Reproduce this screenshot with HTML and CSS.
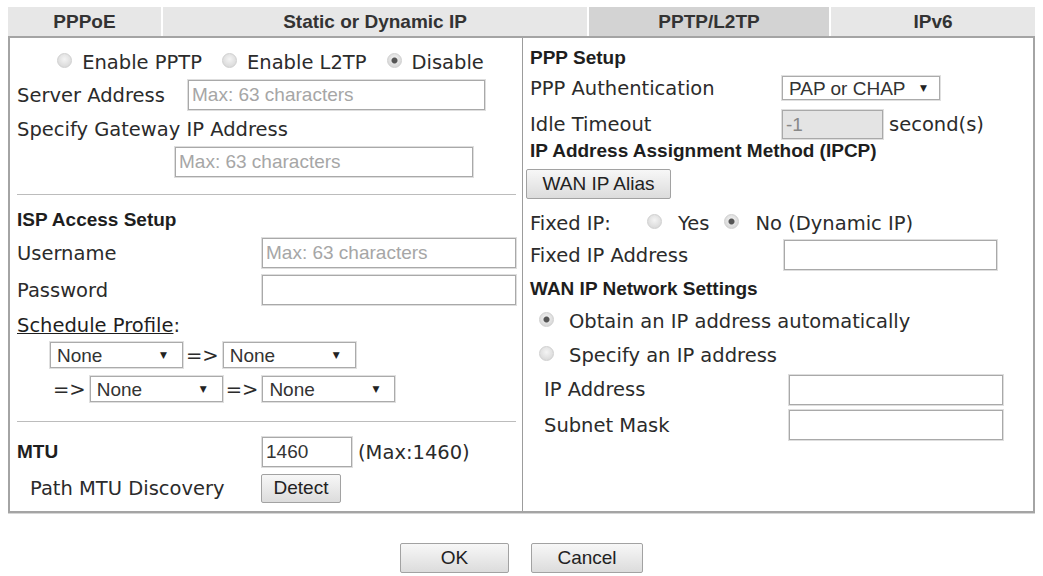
FILE: index.html
```html
<!DOCTYPE html>
<html>
  <head>
    <meta charset="utf-8" />

    <title>WAN &gt;&gt; General Setup</title>

    <link rel="stylesheet" href="styles.css">
  </head>

  <body>
    <div class="crumb"></div>

    <ul class="tabs">
      <li>PPPoE</li>
      <li>Static or Dynamic IP</li>
      <li class="active">PPTP/L2TP</li>
      <li>IPv6</li>
    </ul>

    <form class="panel">
      <div class="col left">
        <div class="row radios">
          <label class="opt"><input type="radio" name="mode" /> Enable PPTP</label>
          <label class="opt"><input type="radio" name="mode" /> Enable L2TP</label>
          <label class="opt"><input type="radio" name="mode" checked /> Disable</label>
        </div>
        <div class="row">
          <span class="key key-server">Server Address</span>
          <input type="text" class="text in-server" placeholder="Max: 63 characters" />
        </div>
        <div class="row">Specify Gateway IP Address</div>
        <div class="row">
          <input type="text" class="text in-gw" placeholder="Max: 63 characters" />
        </div>
        <hr class="rule" />
        <div class="head">ISP Access Setup</div>
        <div class="row">
          <span class="key">Username</span>
          <input type="text" class="text in-user" placeholder="Max: 63 characters" />
        </div>
        <div class="row">
          <span class="key">Password</span>
          <input type="password" class="text in-user" />
        </div>
        <div class="row"><a class="link">Schedule Profile</a>:</div>
        <div class="row sched">
          <span class="select"><select><option>None</option></select></span>
          <span class="arrow">=&gt;</span>
          <span class="select"><select><option>None</option></select></span>
        </div>
        <div class="row sched">
          <span class="arrow">=&gt;</span>
          <span class="select"><select><option>None</option></select></span>
          <span class="arrow">=&gt;</span>
          <span class="select"><select><option>None</option></select></span>
        </div>
        <hr class="rule" />
        <div class="row">
          <span class="key head">MTU</span>
          <input type="text" class="text in-mtu" value="1460" />
          <span class="hint">(Max:1460)</span>
        </div>
        <div class="row indent">
          <span class="key key-path">Path MTU Discovery</span>
          <button type="button" class="btn btn-detect">Detect</button>
        </div>
      </div>

      <div class="col right">
        <div class="head">PPP Setup</div>
        <div class="row">
          <span class="key-r">PPP Authentication</span>
          <span class="select select-auth"><select><option>PAP or CHAP</option></select></span>
        </div>
        <div class="row">
          <span class="key-r">Idle Timeout</span>
          <input type="text" class="text in-idle" value="-1" disabled />
          <span class="hint">second(s)</span>
        </div>
        <div class="head">IP Address Assignment Method (IPCP)</div>
        <div class="row">
          <button type="button" class="btn btn-alias">WAN IP Alias</button>
        </div>
        <div class="row">
          <span class="key-fixed">Fixed IP:</span>
          <label class="opt"><input type="radio" name="fixed" /> Yes</label>
          <label class="opt opt-no"><input type="radio" name="fixed" checked /> No (Dynamic IP)</label>
        </div>
        <div class="row">
          <span class="key-r key-wide">Fixed IP Address</span>
          <input type="text" class="text in-fixed" />
        </div>
        <div class="head">WAN IP Network Settings</div>
        <div class="row choice">
          <label class="opt"><input type="radio" name="wanip" checked /> Obtain an IP address automatically</label>
        </div>
        <div class="row choice">
          <label class="opt"><input type="radio" name="wanip" /> Specify an IP address</label>
        </div>
        <div class="row indent">
          <span class="key-ip">IP Address</span>
          <input type="text" class="text in-ip" />
        </div>
        <div class="row indent">
          <span class="key-ip">Subnet Mask</span>
          <input type="text" class="text in-ip" />
        </div>
      </div>
    </form>

    <div class="actions">
      <button type="button" class="btn btn-ok">OK</button>
      <button type="button" class="btn btn-cancel">Cancel</button>
    </div>
  </body>
</html>
```

FILE: styles.css
```css
html {
  font-family: "DejaVu Sans", Verdana, sans-serif;
  font-size: 19.5px;
  color: #2b2b2b;
}

body {
  margin: 0 8px;
  background: #fff;
}

.crumb {
  height: 7px;
}

/* tabs */
.tabs {
  display: grid;
  grid-template-columns: 153px 424px 240px 1fr;
  column-gap: 2px;
  height: 29px;
  margin: 0;
  padding: 0;
  list-style: none;
}
.tabs li {
  display: flex;
  align-items: center;
  justify-content: center;
  background: #e7e7e7;
  font: bold 19px "Liberation Sans", Arial, sans-serif;
  color: #333;
}
.tabs .active {
  background: #d3d3d3;
}

/* panel */
.panel {
  display: grid;
  grid-template-columns: 513px 1fr;
  margin: 0;
  border: 2px solid #a4a4a4;
  box-shadow: 0 1px 0 #d6d6d6;
}

.col {
  display: grid;
  align-items: center;
  align-content: start;
  box-sizing: border-box;
}

.left {
  border-right: 1px solid #9c9c9c;
  padding: 12px 7px 7px;
  grid-template-rows: 24px 42px 26px 40px 24px 28px 38px 36px 34px 26px 42px 22px 40px 32px;
}

.right {
  padding: 8px 7px 0;
  grid-template-rows: 23px 38px 35px 17px 49px 30px 34px 33px 33px 35px 33px 38px;
}

.row {
  display: flex;
  align-items: center;
  white-space: nowrap;
}

.head {
  font: bold 19px "Liberation Sans", Arial, sans-serif;
  color: #1e1e1e;
  white-space: nowrap;
}

.rule {
  margin: 0;
  border: 0;
  border-top: 1px solid #bcbcbc;
}

.key {
  width: 245px;
  flex: none;
}
.key-server {
  width: 171px;
}
.key-path {
  width: 231px;
}
.key-r {
  width: 252px;
  flex: none;
}
.key-wide {
  width: 254px;
}
.key-fixed {
  width: 117px;
  flex: none;
}
.key-ip {
  width: 245px;
  flex: none;
}

.indent {
  padding-left: 13px;
}
.right .indent {
  padding-left: 14px;
}

.hint {
  margin-left: 6px;
}

.link {
  color: #1e1e1e;
  text-decoration: underline;
}

/* radios */
.radios {
  justify-content: center;
  gap: 20px;
  padding-left: 8px;
}
.opt {
  display: flex;
  align-items: center;
}
input[type="radio"] {
  appearance: none;
  width: 15px;
  height: 15px;
  margin: 0 10px 4px 0;
  border: 1px solid #d0d0d0;
  border-radius: 50%;
  background: radial-gradient(circle at 50% 40%, #f4f4f4, #d2d2d2);
  flex: none;
}
input[type="radio"]:checked {
  background: radial-gradient(circle, #555 0 2.5px, transparent 3.5px),
    radial-gradient(circle at 50% 40%, #f4f4f4, #cecece);
}
.right .row > .opt input {
  margin-right: 16px;
}
.opt-no {
  margin-left: 15px;
}
.choice {
  padding-left: 9px;
}
.right .choice .opt input {
  margin-right: 15px;
}

/* text fields */
.text {
  box-sizing: border-box;
  height: 30px;
  padding: 0 3px;
  border: 1px solid #a9a9a9;
  box-shadow: 0 0 0 1px #dedede;
  font: 19px "Liberation Sans", Arial, sans-serif;
  color: #333;
  background: #fff;
}
.text::placeholder {
  color: #a6a6a6;
}
.in-server {
  width: 297px;
}
.in-gw {
  width: 298px;
  margin-left: 158px;
}
.in-user {
  width: 254px;
}
.in-mtu {
  width: 90px;
}
.in-idle {
  width: 101px;
  height: 29px;
  background: #e4e4e4;
  color: #888;
}
.in-fixed {
  width: 213px;
}
.in-ip {
  width: 214px;
}

/* selects */
.select {
  display: inline-flex;
  align-items: center;
  box-sizing: border-box;
  width: 133px;
  height: 26px;
  border: 1px solid #ababab;
  box-shadow: 0 0 0 1px #e0e0e0;
  background: #fff;
}
.select select {
  flex: 1;
  min-width: 0;
  height: 100%;
  padding: 0 0 0 6px;
  border: 0;
  background: none;
  appearance: none;
  font: 19px "Liberation Sans", Arial, sans-serif;
  color: #333;
  outline: none;
}
.select::after {
  content: "\25BC";
  font-size: 9px;
  color: #222;
  margin-right: 15px;
}
.select-auth {
  width: 158px;
  height: 24px;
}
.select-auth::after {
  margin-right: 12px;
}

.sched {
  padding-left: 33px;
}
.arrow {
  margin: 0 4px 0 3px;
}

/* buttons */
.btn {
  box-sizing: border-box;
  height: 30px;
  padding: 0;
  border: 1px solid #a2a2a2;
  border-radius: 2px;
  background: linear-gradient(#f7f7f7, #dcdcdc);
  font: 19px "Liberation Sans", Arial, sans-serif;
  color: #222;
}
.btn-detect {
  width: 80px;
  height: 29px;
}
.btn-alias {
  width: 145px;
  margin-left: -4px;
}
.btn-ok {
  width: 109px;
}
.btn-cancel {
  width: 112px;
}

.actions {
  display: flex;
  justify-content: center;
  gap: 22px;
  margin-top: 30px;
}
```
